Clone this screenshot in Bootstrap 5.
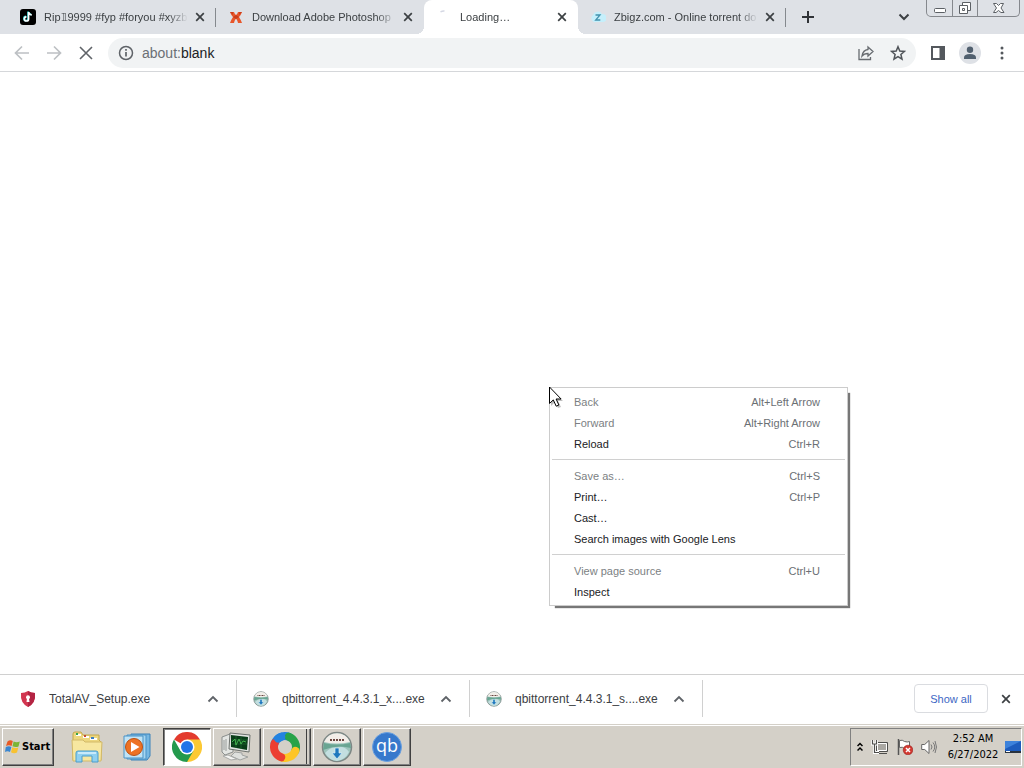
<!DOCTYPE html>
<html lang="en">
<head>
<meta charset="utf-8">
<meta name="viewport" content="width=device-width, initial-scale=1">
<title>about:blank</title>
<link href="https://cdn.jsdelivr.net/npm/bootstrap@5.3.0/dist/css/bootstrap.min.css" rel="stylesheet">
<style>
  body { font-family: "Liberation Sans", Arial, sans-serif; font-size: 11px; line-height: 16px; color: #3c4043; background: #fff; }
  button { border: 0; background: none; padding: 0; color: inherit; font: inherit; }
  svg { display: block; flex: none; }
  .ic { fill: none; stroke: #bdc0c4; stroke-width: 1.7; }

  /* tab strip */
  .tabstrip { background: #dee1e6; height: 34px; padding-left: 8px; }
  .tab { flex: 0 1 208px; min-width: 0; height: 34px; padding: 0 0 0 12px; position: relative; }
  .tab-label { height: 34px; min-width: 0; }
  .tab-name { min-width: 0; margin-right: 4px; overflow: hidden; white-space: nowrap; line-height: 34px; -webkit-mask-image: linear-gradient(to left, transparent, #000 20px); mask-image: linear-gradient(to left, transparent, #000 20px); }
  .tab-on { flex-basis: 154px; background: #fff; border-radius: 8px 8px 0 0; }
  .tab-on::before, .tab-on::after { content: ""; position: absolute; bottom: 0; width: 8px; height: 8px; }
  .tab-on::before { right: 100%; background: radial-gradient(circle at 0 0, transparent 8px, #fff 8px); }
  .tab-on::after { left: 100%; background: radial-gradient(circle at 100% 0, transparent 8px, #fff 8px); }
  .tab-line { border-right: 1px solid #85898e; height: 19px; width: 8px; }
  .sq16 { width: 16px; height: 16px; flex: none; }
  .winctl { border: 1px solid #85888d; border-top: 0; border-radius: 0 0 5px 5px; height: 17px; margin-right: 4px; }
  .winctl button { width: 25px; height: 16px; }
  .winctl button + button { border-left: 1px solid #85888d; }
  .winctl button:last-child { width: 42px; }

  /* toolbar */
  .toolbar { height: 38px; border-bottom: 1px solid #d5d7da; padding: 0 16px 0 14px; }
  .omnibox { background: #f1f3f4; border-radius: 15px; height: 30px; padding: 0 10px; margin: 0 14px; }
  .address-text { font-size: 14px; color: #6b6f74; }
  .address-text b { font-weight: 400; color: #202124; }
  .avatar { margin: 0 15px 0 13px; }

  /* context menu */
  .page-area { min-height: 300px; }
  .ctx { left: 549px; top: 315px; width: 299px; background: #fff; border: 1px solid #ccc; padding: 3px 0; box-shadow: 4px 4px 1px -2px #777; }
  .ctx-item { height: 21px; padding: 0 27px 0 24px; color: #202124; }
  .ctx-item kbd { font: inherit; background: none; color: #6b6f74; padding: 0; }
  .ctx-item:disabled { color: #7c7f83; }
  .ctx hr { margin: 5px 2px; border-top: 1px solid #d0d0d0; opacity: 1; }
  .pointer { left: 548px; top: 314px; }

  /* downloads */
  .shelf { border-top: 1px solid #d0d0d0; height: 50px; padding: 0 13px 2px 0; }
  .dl { flex: 0 1 233px; min-width: 0; height: 37px; border-right: 1px solid #d0d0d0; padding: 0 17px 0 16px; font-size: 12px; }
  .dl:first-child { flex-basis: 237px; padding-left: 20px; }
  .dl-name { margin: 0 8px 0 13px; }
  .show-all { border: 1px solid #dadce0; border-radius: 4px; color: #4067c4; height: 29px; width: 74px; margin-right: 13px; }

  /* taskbar */
  .taskbar { background: #d4d0c8; border-top: 1px solid #d4d0c8; box-shadow: inset 0 1px #fff; height: 44px; padding: 3px 2px 2px; font-family: "DejaVu Sans Condensed", "DejaVu Sans", sans-serif; color: #000; }
  .raised { border: 1px solid; border-color: #fff #404040 #404040 #fff; box-shadow: inset -1px -1px #808080; height: 38px; width: 48px; }
  .start { width: 52px; font-weight: 700; padding-left: 2px; gap: 1px; }
  .pressed { border-color: #404040 #fff #fff #404040; box-shadow: inset 1px 1px #808080; background: #fff; }
  .stacked { box-shadow: inset -1px -1px #808080, inset -3px 0 #d4d0c8, inset -4px 0 #404040; }
  .quick { gap: 20px; margin: 0 12px 0 17px; }
  .apps { gap: 2px; }
  .tray { border: 1px solid; border-color: #808080 #fff #fff #808080; height: 38px; padding-left: 6px; }
  .clock { line-height: 16px; width: 56px; }
</style>
</head>
<body class="d-flex flex-column min-vh-100">

<svg width="0" height="0" class="position-absolute" aria-hidden="true">
  <defs>
    <symbol id="close" viewBox="0 0 10 10"><path d="M1.200 1.200l7.600 7.600M8.800 1.200l-7.600 7.600" fill="none" stroke="#3c4043" stroke-width="1.700"/></symbol>
    <symbol id="caret" viewBox="0 0 12 8"><path d="M1.500 6.500l4.500-4.500 4.500 4.500" fill="none" stroke="#5f6368" stroke-width="1.800"/></symbol>
    <symbol id="setup" viewBox="0 0 32 32">
      <circle cx="16" cy="16" r="14.500" fill="#9cc4bb" stroke="#7d8785" stroke-width="1.500"/>
      <path d="M3 11a14 14 0 0 1 26 0q-13 3-26 0z" fill="#f2eee9"/>
      <path d="M3 12q13 3 26 0l1 5q-14-4-28 2z" fill="#69a592"/>
      <path d="M4 22q7-7 12-5 7-3 12 4-4 8-12 9-8-1-12-8z" fill="#c3dfe0"/>
      <path d="M9 9h14" stroke="#6b4640" stroke-width="2" stroke-dasharray="2 1"/>
      <path d="M14 17h4v5h3l-5 6-5-6h3z" fill="#1e78bd" stroke="#d9eff8" stroke-width=".7"/>
    </symbol>
  </defs>
</svg>

<header>
  <div class="tabstrip d-flex align-items-center">
    <div class="tab d-flex align-items-center">
      <button class="tab-label d-flex align-items-center gap-2 flex-fill overflow-hidden text-start">
        <svg width="16" height="16" viewBox="0 0 16 16"><rect width="16" height="16" rx="3" fill="#000"/><path d="M8.600 3v6.900a2.100 2.100 0 1 1-2.100-2.100M8.600 3.200q.5 2.500 3.200 2.800" fill="none" stroke="#25d8d6" stroke-width="1.800" transform="translate(-.5 -.4)"/><path d="M8.600 3v6.900a2.100 2.100 0 1 1-2.100-2.100M8.600 3.200q.5 2.500 3.200 2.800" fill="none" stroke="#fff" stroke-width="1.700"/></svg>
        <span class="tab-name flex-fill">Rip𝟙9999 #fyp #foryou #xyzb</span>
      </button>
      <button class="sq16 d-flex align-items-center justify-content-center" aria-label="Close tab"><svg width="10" height="10"><use href="#close"/></svg></button>
      <span class="tab-line"></span>
    </div>
    <div class="tab d-flex align-items-center">
      <button class="tab-label d-flex align-items-center gap-2 flex-fill overflow-hidden text-start">
        <svg width="16" height="16" viewBox="0 0 16 16"><path d="M2 3h4q1 3 2 3t2-3h4q-1 3-3 5 2 3 3 6h-4q-1-4-2-4t-2 4H2q1-3 3-6-2-2-3-5z" fill="#e8562a"/><path d="M2 3h3v3zM14 3h-3v3zM5 8l3-2 3 2-3 2z" fill="#c93d1b"/></svg>
        <span class="tab-name flex-fill">Download Adobe Photoshop</span>
      </button>
      <button class="sq16 d-flex align-items-center justify-content-center me-2" aria-label="Close tab"><svg width="10" height="10"><use href="#close"/></svg></button>
    </div>
    <div class="tab tab-on d-flex align-items-center">
      <button class="tab-label d-flex align-items-center gap-2 flex-fill overflow-hidden text-start">
        <svg width="16" height="16" viewBox="0 0 16 16"><path d="M4.500 2.800q2-1 4-.8" fill="none" stroke="#d5d8e4" stroke-width="1.500"/></svg>
        <span class="tab-name flex-fill">Loading…</span>
      </button>
      <button class="sq16 d-flex align-items-center justify-content-center me-2" aria-label="Close tab"><svg width="10" height="10"><use href="#close"/></svg></button>
    </div>
    <div class="tab d-flex align-items-center">
      <button class="tab-label d-flex align-items-center gap-2 flex-fill overflow-hidden text-start">
        <svg width="16" height="16" viewBox="0 0 16 16"><path d="M4 13a4 4 0 0 1-1-7 5 5 0 0 1 9-1 4 4 0 0 1 1 8z" fill="#c5effb"/><path d="M5.500 6h4.500l-4.300 5h4.600" fill="none" stroke="#4292ae" stroke-width="1.300"/></svg>
        <span class="tab-name flex-fill">Zbigz.com - Online torrent do</span>
      </button>
      <button class="sq16 d-flex align-items-center justify-content-center" aria-label="Close tab"><svg width="10" height="10"><use href="#close"/></svg></button>
      <span class="tab-line"></span>
    </div>
    <button class="ms-3" aria-label="New tab"><svg width="12" height="12" viewBox="0 0 12 12"><path d="M6 0v12M0 6h12" stroke="#303337" stroke-width="2"/></svg></button>
    <button class="ms-auto me-3" aria-label="Search tabs"><svg width="12" height="8" viewBox="0 0 12 8"><path d="M1.500 1.500L6 6l4.500-4.500" fill="none" stroke="#3c4043" stroke-width="2"/></svg></button>
    <div class="winctl d-flex align-self-start">
      <button class="d-flex align-items-center justify-content-center" aria-label="Minimize"><svg width="14" height="14" viewBox="0 0 14 14"><rect x="1.500" y="7.500" width="11" height="4" rx="1" fill="#fff" stroke="#5c6065"/></svg></button>
      <button class="d-flex align-items-center justify-content-center" aria-label="Restore"><svg width="14" height="14" viewBox="0 0 14 14"><path d="M4.500 1.500h8v8h-8z" fill="#fff" stroke="#5c6065"/><path d="M1.500 4.500h8v8h-8z" fill="#fff" stroke="#5c6065"/><path d="M4.500 7.500h2v2h-2z" fill="none" stroke="#5c6065"/></svg></button>
      <button class="d-flex align-items-center justify-content-center" aria-label="Close"><svg width="14" height="14" viewBox="0 0 14 14"><path d="M1.500 2.500h3l2 2 2-2h3L9 7l3 4.500H9l-2.500-2-2.500 2H1.500L4.500 7z" fill="#fff" stroke="#5c6065"/></svg></button>
    </div>
  </div>

  <div class="toolbar d-flex align-items-center">
    <button aria-label="Back"><svg width="16" height="16" viewBox="0 0 16 16"><path d="M15 8H2M8 1.500L1.500 8 8 14.500" class="ic"/></svg></button>
    <button class="ms-3" aria-label="Forward"><svg width="16" height="16" viewBox="0 0 16 16"><path d="M1 8h13M8 1.500L14.500 8 8 14.500" class="ic"/></svg></button>
    <button class="ms-3" aria-label="Stop"><svg width="16" height="16" viewBox="0 0 16 16"><path d="M2 2l12 12M14 2L2 14" fill="none" stroke="#5f6368" stroke-width="1.600"/></svg></button>
    <div class="omnibox flex-grow-1 d-flex align-items-center">
      <button class="me-2" aria-label="View site information"><svg width="16" height="16" viewBox="0 0 16 16"><circle cx="8" cy="8" r="6.500" fill="none" stroke="#5f6368" stroke-width="1.500"/><path d="M8 7v4.500M8 4v1.700" stroke="#5f6368" stroke-width="1.700"/></svg></button>
      <span class="address-text flex-grow-1" role="textbox" contenteditable="true" aria-label="Address" spellcheck="false">about:<b>blank</b></span>
      <button aria-label="Share"><svg width="16" height="16" viewBox="0 0 16 16"><path d="M1 4v10.500h11.500V12" fill="none" stroke="#686c71" stroke-width="1.300"/><path d="M10 2l5 4.500-5 4.500V8.500q-4 0-6 2.500Q5 5 10 4.500z" fill="none" stroke="#686c71" stroke-width="1.300"/></svg></button>
      <button class="ms-3" aria-label="Bookmark this tab"><svg width="16" height="16" viewBox="0 0 16 16"><path d="M8 1.700l1.800 4.300 4.700.4-3.600 3.100 1.100 4.600L8 11.600l-4 2.500 1.100-4.600L1.500 6.400 6.200 6z" fill="none" stroke="#505459" stroke-width="1.500"/></svg></button>
    </div>
    <button aria-label="Side panel"><svg width="16" height="16" viewBox="0 0 16 16"><path d="M1 1h14v14H1zM3 3v10h6.500V3z" fill="#54585d" fill-rule="evenodd"/></svg></button>
    <button class="avatar" aria-label="Profile"><svg width="22" height="22" viewBox="0 0 22 22"><circle cx="11" cy="11" r="11" fill="#dee1e6"/><circle cx="11" cy="7.800" r="3.200" fill="#51606f"/><path d="M5 17v-1.500q0-3.500 6-3.500t6 3.500V17z" fill="#51606f"/></svg></button>
    <button aria-label="Menu"><svg width="12" height="16" viewBox="0 0 12 16"><circle cx="6" cy="3" r="1.500" fill="#54585d"/><circle cx="6" cy="8" r="1.500" fill="#54585d"/><circle cx="6" cy="13" r="1.500" fill="#54585d"/></svg></button>
  </div>
</header>

<main class="page-area flex-grow-1 position-relative">
  <div class="ctx position-absolute d-flex flex-column" role="menu">
    <button class="ctx-item d-flex align-items-center justify-content-between" role="menuitem" disabled>Back<kbd>Alt+Left Arrow</kbd></button>
    <button class="ctx-item d-flex align-items-center justify-content-between" role="menuitem" disabled>Forward<kbd>Alt+Right Arrow</kbd></button>
    <button class="ctx-item d-flex align-items-center justify-content-between" role="menuitem">Reload<kbd>Ctrl+R</kbd></button>
    <hr>
    <button class="ctx-item d-flex align-items-center justify-content-between" role="menuitem" disabled>Save as…<kbd>Ctrl+S</kbd></button>
    <button class="ctx-item d-flex align-items-center justify-content-between" role="menuitem">Print…<kbd>Ctrl+P</kbd></button>
    <button class="ctx-item d-flex align-items-center justify-content-between" role="menuitem">Cast…</button>
    <button class="ctx-item d-flex align-items-center justify-content-between" role="menuitem">Search images with Google Lens</button>
    <hr>
    <button class="ctx-item d-flex align-items-center justify-content-between" role="menuitem" disabled>View page source<kbd>Ctrl+U</kbd></button>
    <button class="ctx-item d-flex align-items-center justify-content-between" role="menuitem">Inspect</button>
  </div>
  <svg class="pointer position-absolute" width="16" height="23" viewBox="0 0 16 23"><path d="M3 3v17l4-4 3 6 3-1-3-6h5z" fill="#000" opacity=".25"/><path d="M1.500 1v16.500l3.800-3.600 2.900 6.300 2.700-1.200-2.800-6h5z" fill="#fff" stroke="#000"/></svg>
</main>

<footer>
  <div class="shelf d-flex align-items-center">
    <div class="dl d-flex align-items-center">
      <svg width="16" height="16" viewBox="0 0 16 16"><path d="M8 0q3 2 7 2 1 10-7 14Q0 12 1 2q4 0 7-2z" fill="#d23650"/><path d="M8 0q3 2 7 2 1 10-7 14z" fill="#b32443"/><circle cx="8" cy="6.300" r="2" fill="#fff"/><path d="M7.200 6h1.600l.7 5h-3z" fill="#fff"/></svg>
      <span class="dl-name flex-fill text-truncate">TotalAV_Setup.exe</span>
      <button aria-label="Options"><svg width="12" height="8"><use href="#caret"/></svg></button>
    </div>
    <div class="dl d-flex align-items-center">
      <svg width="16" height="16"><use href="#setup"/></svg>
      <span class="dl-name flex-fill text-truncate">qbittorrent_4.4.3.1_x....exe</span>
      <button aria-label="Options"><svg width="12" height="8"><use href="#caret"/></svg></button>
    </div>
    <div class="dl d-flex align-items-center">
      <svg width="16" height="16"><use href="#setup"/></svg>
      <span class="dl-name flex-fill text-truncate">qbittorrent_4.4.3.1_s....exe</span>
      <button aria-label="Options"><svg width="12" height="8"><use href="#caret"/></svg></button>
    </div>
    <button class="show-all ms-auto">Show all</button>
    <button aria-label="Close downloads"><svg width="10" height="10"><use href="#close"/></svg></button>
  </div>

  <div class="taskbar d-flex align-items-center">
    <button class="raised start d-flex align-items-center">
      <svg width="16" height="16" viewBox="0 0 16 16"><path d="M2.500 2.500q2.500-2 5.300-.5L6.600 7Q4 5.700 1 7z" fill="#e85a24"/><path d="M8.600 2.500q3 1.500 6.200 0L13.500 7.500q-3 1.300-6-.2z" fill="#7ab535"/><path d="M.8 8q3-1.500 5.600-.1L5 13q-2.600-1.500-5 0z" fill="#3a86d0"/><path d="M7.300 8.300q3 1.400 6 .1L12 13.500q-3 1.400-6-.2z" fill="#f8c231"/></svg>
      <span>Start</span>
    </button>
    <div class="quick d-flex align-items-center">
      <button aria-label="Windows Explorer"><svg width="32" height="32" viewBox="0 0 32 32"><path d="M2 3q0-2 2-2h6l2 3h16v5l2 2v18H2z" fill="#edd77e" stroke="#c5a84b"/><path d="M5 4h5M12 6h6M19 8h7" stroke="#fff" stroke-width="2"/><path d="M5 3h2" stroke="#36a34b" stroke-width="2"/><path d="M13 5h2" stroke="#c44638" stroke-width="2"/><path d="M20 7h3" stroke="#3f7fc1" stroke-width="2"/><path d="M1 9h11l2 2h17l-1 19H2z" fill="#f7e7a0" stroke="#d2b968"/><path d="M5 31V22q0-2 2-2h18q2 0 2 2v9h-6v-6H11v6z" fill="#8fd0f0" stroke="#4a9dcc"/><path d="M7 22h18" stroke="#dbf3ff" stroke-width="1.500"/></svg></button>
      <button aria-label="Media Player"><svg width="28" height="28" viewBox="0 0 28 28"><path d="M8 1h19v22l-3 4H8z" fill="#76b7e2" stroke="#3b82b9"/><path d="M4 2h19v24H4z" fill="#a6d6f1" stroke="#4a93c7"/><path d="M1 3h19v22H1z" fill="#c0e3f5" stroke="#4a93c7"/><circle cx="11" cy="14" r="8.500" fill="#ed7224" stroke="#bc5114"/><path d="M8 9l8.500 5L8 19z" fill="#fff"/></svg></button>
    </div>
    <div class="apps d-flex">
      <button class="raised pressed d-flex align-items-center justify-content-center" aria-label="Chrome"><svg width="30" height="30" viewBox="0 0 30 30"><path d="M15 15L2 7.500A15 15 0 0 1 28 7.500z" fill="#e33b2e"/><path d="M15 15V7.500h13A15 15 0 0 1 15 30z" fill="#fcc934"/><path d="M15 15l6.500 3.750L15 30A15 15 0 0 1 2 7.500l6.500 11.250z" fill="#249a4d"/><circle cx="15" cy="15" r="7.500" fill="#fff"/><circle cx="15" cy="15" r="6" fill="#2374e8"/></svg></button>
      <button class="raised d-flex align-items-center justify-content-center" aria-label="System monitor"><svg width="32" height="30" viewBox="0 0 32 30"><path d="M1 5l8-3 3 2v16l-8 3-3-3z" fill="#e3e5e2" stroke="#8b8f8d"/><path d="M3 8v10M5 7v12" stroke="#989c9a"/><path d="M9 1l20 2-1 17-20-3z" fill="#e3e5e2" stroke="#6c716d"/><path d="M10 3l17 2-1 13-16-3z" fill="#093d18"/><path d="M11 8h15M11 12h15M15 4v12M20 5v12" stroke="#236b35" stroke-width=".7"/><path d="M11 10l3-3 1 6 3-6 2 5 2-3 3 1" fill="none" stroke="#42b34e"/><path d="M14 20l7 1v2l6 2-8 3-9-4z" fill="#dee0dd" stroke="#a0a3a1"/><path d="M2 24l5-1 9 4-6 1z" fill="#f4f4f2" stroke="#a8aaa8"/></svg></button>
      <button class="raised stacked d-flex align-items-center justify-content-center pe-1" aria-label="ShareX"><svg width="30" height="30" viewBox="0 0 30 30"><g fill="none" stroke-width="8" stroke-linecap="round"><path d="M4.700 11.200A11 11 0 0 1 18.800 4.700" stroke="#2383e0"/><path d="M18.800 4.700A11 11 0 0 1 25.300 18.800" stroke="#27a348"/><path d="M25.300 18.800A11 11 0 0 1 11.200 25.300" stroke="#fdc526"/><path d="M11.200 25.300A11 11 0 0 1 4.700 11.200" stroke="#ec3e32"/><path d="M8 6.500A11 11 0 0 1 11.200 4.700" stroke="#2383e0"/></g></svg></button>
      <button class="raised d-flex align-items-center justify-content-center" aria-label="Installer"><svg width="32" height="32"><use href="#setup"/></svg></button>
      <button class="raised d-flex align-items-center justify-content-center" aria-label="qBittorrent"><svg width="30" height="30" viewBox="0 0 30 30"><circle cx="15" cy="15" r="14.500" fill="#3779cc" stroke="#6ba1e0"/><text x="15" y="20" text-anchor="middle" font-family="Open Sans, sans-serif" font-size="18" fill="#fff">qb</text></svg></button>
    </div>
    <div class="tray d-flex align-items-center ms-auto">
      <button aria-label="Show hidden icons"><svg width="6" height="10" viewBox="0 0 6 10"><path d="M.5 4L3 1.500 5.500 4M.5 8.500L3 6l2.500 2.500" fill="none" stroke="#000" stroke-width="1.500"/></svg></button>
      <svg class="ms-2" width="18" height="16" viewBox="0 0 18 16"><path d="M5.500 3.500h11v9h-11z" fill="#aaa8a3" stroke="#4e4e4c"/><path d="M6.500 4.500h9v7h-9z" fill="none" stroke="#fff"/><path d="M8 14.500h8" stroke="#4e4e4c"/><path d="M1.500 1v4h4V1M3.500 5v8.500H8" fill="none" stroke="#fff" stroke-width="3"/><path d="M1.500 1v4h4V1M3.500 5v8.500H8" fill="none" stroke="#4e4e4c" stroke-width="1.200"/></svg>
      <svg class="ms-2" width="16" height="16" viewBox="0 0 16 16"><path d="M1.500 0v16" stroke="#555" stroke-width="1.500"/><path d="M2.500 1.500q3-1 5 1 3 1 5 0v7q-3 1-5 0-2-2-5-1z" fill="#fff" stroke="#666"/><circle cx="11" cy="11" r="4.800" fill="#d33931" stroke="#97231f" stroke-width=".6"/><path d="M9 9l4 4M13 9l-4 4" stroke="#fff" stroke-width="1.500"/></svg>
      <svg class="ms-2" width="16" height="16" viewBox="0 0 16 16"><path d="M.7 5.500h3L8 1.500v13l-4.300-4H.7z" fill="#fff" stroke="#666"/><path d="M10 5.500q2 2.500 0 5M12 3.500q3.500 4.500 0 9M14 2q3 6 0 12" fill="none" stroke="#777"/></svg>
      <div class="clock text-center ms-2">2:52 AM<br>6/27/2022</div>
      <svg class="ms-1" width="16" height="14" viewBox="0 0 16 14"><path d="M0 1h16v10H0z" fill="#1d5cbd"/><path d="M0 1h16L0 9z" fill="#3d82db"/><path d="M0 11h16v2H0z" fill="#29333f"/><path d="M1 11.500h4" stroke="#fff"/></svg>
    </div>
  </div>
</footer>

<script src="https://cdn.jsdelivr.net/npm/bootstrap@5.3.0/dist/js/bootstrap.bundle.min.js"></script>
</body>
</html>
